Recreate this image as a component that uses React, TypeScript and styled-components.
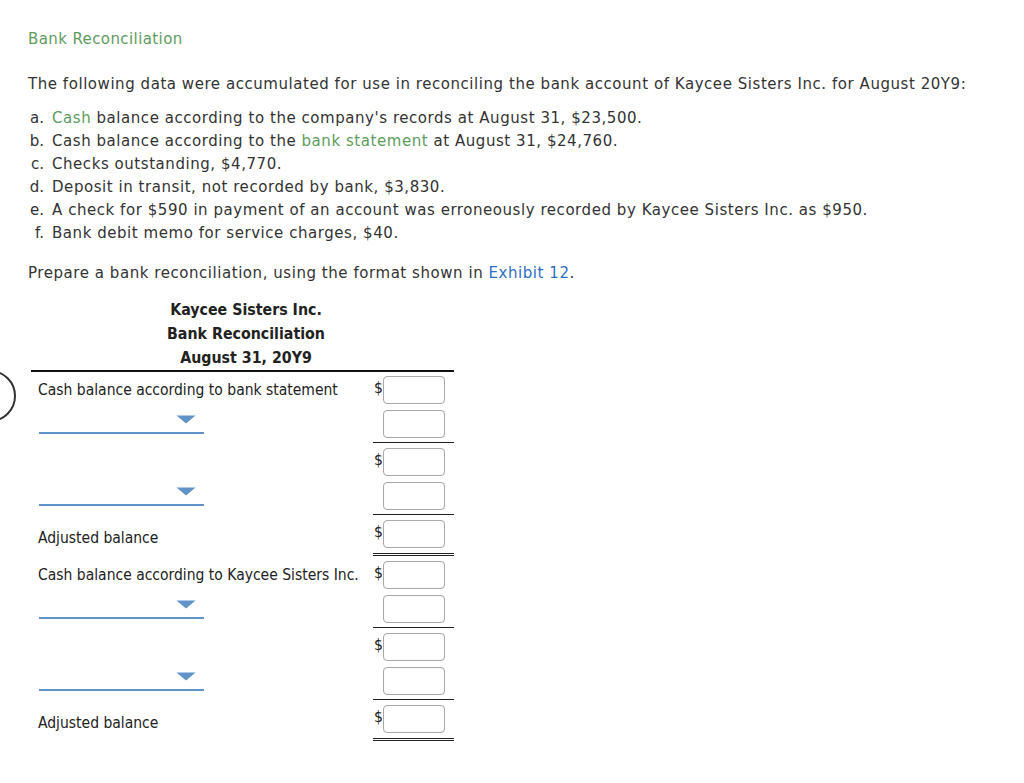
import React from "react";
import styled, { createGlobalStyle } from "styled-components";

const Global = createGlobalStyle`
  html, body { margin: 0; padding: 0; background: #fff; }
  body { font-family: "DejaVu Sans", Verdana, sans-serif; color: #333; }
`;

const Page = styled.div`
  padding: 28px 0 0 28px;
  font-size: 15px;
  line-height: 23px;
  letter-spacing: 0.55px;
`;

const Title = styled.div`
  color: #5e9c5e;
  letter-spacing: 0.4px;
`;

const Para = styled.p`
  margin: 22px 0 0;
`;

const List = styled.div`
  margin-top: 11px;
  display: flex;
  flex-direction: column;
`;

const Item = styled.div`
  display: grid;
  grid-template-columns: 16px 1fr;
  column-gap: 8px;
`;

const Marker = styled.span`
  text-align: right;
  letter-spacing: 0;
`;

const Green = styled.span`
  color: #5e9c5e;
`;

const Blue = styled.span`
  color: #2c6fc0;
`;

const Prepare = styled.p`
  margin: 17px 0 0;
`;

const Sheet = styled.div`
  position: relative;
  margin: 13px 0 0 3px;
  width: 423px;
  font-family: "DejaVu Sans Condensed", Tahoma, sans-serif;
  color: #222;
  letter-spacing: 0;
`;

const Heading = styled.div`
  font-weight: bold;
  text-align: center;
  line-height: 24px;
  font-size: 15.8px;
  padding-left: 7px;
`;

const Body = styled.div`
  border-top: 2px solid #111;
`;

const Row = styled.div<{ first?: boolean }>`
  display: grid;
  grid-template-columns: 342px 81px;
  padding-top: ${(p) => (p.first ? 4 : 3)}px;
`;

const LabelCell = styled.div<{ low?: boolean }>`
  height: 28px;
  display: flex;
  align-items: center;
  padding-left: 7px;
  padding-top: ${(p) => (p.low ? 8 : 0)}px;
  box-sizing: border-box;
  font-size: 15.5px;
  white-space: nowrap;
`;

const AmountCell = styled.div<{ rule?: "single" | "double" }>`
  display: flex;
  align-items: center;
  padding: 0 8px 0 1px;
  padding-bottom: ${(p) => (p.rule === "double" ? 5 : p.rule === "single" ? 4 : 3)}px;
  margin-bottom: ${(p) => (p.rule ? 2 : 0)}px;
  border-bottom: ${(p) =>
    p.rule === "double" ? "3px double #222" : p.rule === "single" ? "1px solid #222" : "none"};
`;

const Dollar = styled.span`
  width: 9px;
  font-size: 15.5px;
  line-height: 28px;
  margin-top: -4px;
`;

const Input = styled.div`
  width: 62px;
  height: 28px;
  box-sizing: border-box;
  border: 1px solid #a9a9a9;
  border-radius: 4px;
  background: #fff;
  box-shadow: inset 0 0 1px rgba(0, 0, 0, 0.15);
`;

const Select = styled.div`
  align-self: flex-start;
  width: 165px;
  height: 24px;
  box-sizing: border-box;
  border-bottom: 2px solid #5f93c9;
  margin: 0 0 0 1px;
  display: flex;
  align-items: flex-end;
  justify-content: flex-end;
  padding: 0 8px 8px 0;
`;

const Arrow = styled.svg`
  display: block;
`;

const Ring = styled.svg`
  position: absolute;
  left: -63px;
  top: 71px;
`;

type RowSpec = {
  label?: string;
  low?: boolean;
  select?: boolean;
  dollar?: boolean;
  rule?: "single" | "double";
};

const rows: RowSpec[] = [
  { label: "Cash balance according to bank statement", dollar: true },
  { select: true, rule: "single" },
  { dollar: true },
  { select: true, rule: "single" },
  { label: "Adjusted balance", low: true, dollar: true, rule: "double" },
  { label: "Cash balance according to Kaycee Sisters Inc.", dollar: true },
  { select: true, rule: "single" },
  { dollar: true },
  { select: true, rule: "single" },
  { label: "Adjusted balance", low: true, dollar: true, rule: "double" },
];

const items: [string, React.ReactNode][] = [
  ["a.", <><Green>Cash</Green> balance according to the company's records at August 31, $23,500.</>],
  ["b.", <>Cash balance according to the <Green>bank statement</Green> at August 31, $24,760.</>],
  ["c.", <>Checks outstanding, $4,770.</>],
  ["d.", <>Deposit in transit, not recorded by bank, $3,830.</>],
  ["e.", <>A check for $590 in payment of an account was erroneously recorded by Kaycee Sisters Inc. as $950.</>],
  ["f.", <>Bank debit memo for service charges, $40.</>],
];

export default function App() {
  return (
    <>
      <Global />
      <Page>
        <Title>Bank Reconciliation</Title>
        <Para>
          The following data were accumulated for use in reconciling the bank account of Kaycee Sisters Inc. for August 20Y9:
        </Para>
        <List>
          {items.map(([m, t]) => (
            <Item key={m}>
              <Marker>{m}</Marker>
              <span>{t}</span>
            </Item>
          ))}
        </List>
        <Prepare>
          Prepare a bank reconciliation, using the format shown in <Blue>Exhibit 12</Blue>.
        </Prepare>
        <Sheet>
          <Ring width="52" height="54" viewBox="0 0 52 54">
            <circle cx="22" cy="27" r="25" fill="none" stroke="#333" strokeWidth="2" />
          </Ring>
          <Heading>Kaycee Sisters Inc.</Heading>
          <Heading>Bank Reconciliation</Heading>
          <Heading>August 31, 20Y9</Heading>
          <Body>
            {rows.map((r, i) => (
              <Row key={i} first={i === 0}>
                <LabelCell low={r.low}>
                  {r.label}
                  {r.select && (
                    <Select>
                      <Arrow width="20" height="9" viewBox="0 0 20 9">
                        <path d="M0.5 0.5 H19.5 L10 8.5 Z" fill="#5f93c9" />
                      </Arrow>
                    </Select>
                  )}
                </LabelCell>
                <AmountCell rule={r.rule}>
                  <Dollar>{r.dollar ? "$" : ""}</Dollar>
                  <Input />
                </AmountCell>
              </Row>
            ))}
          </Body>
        </Sheet>
      </Page>
    </>
  );
}
